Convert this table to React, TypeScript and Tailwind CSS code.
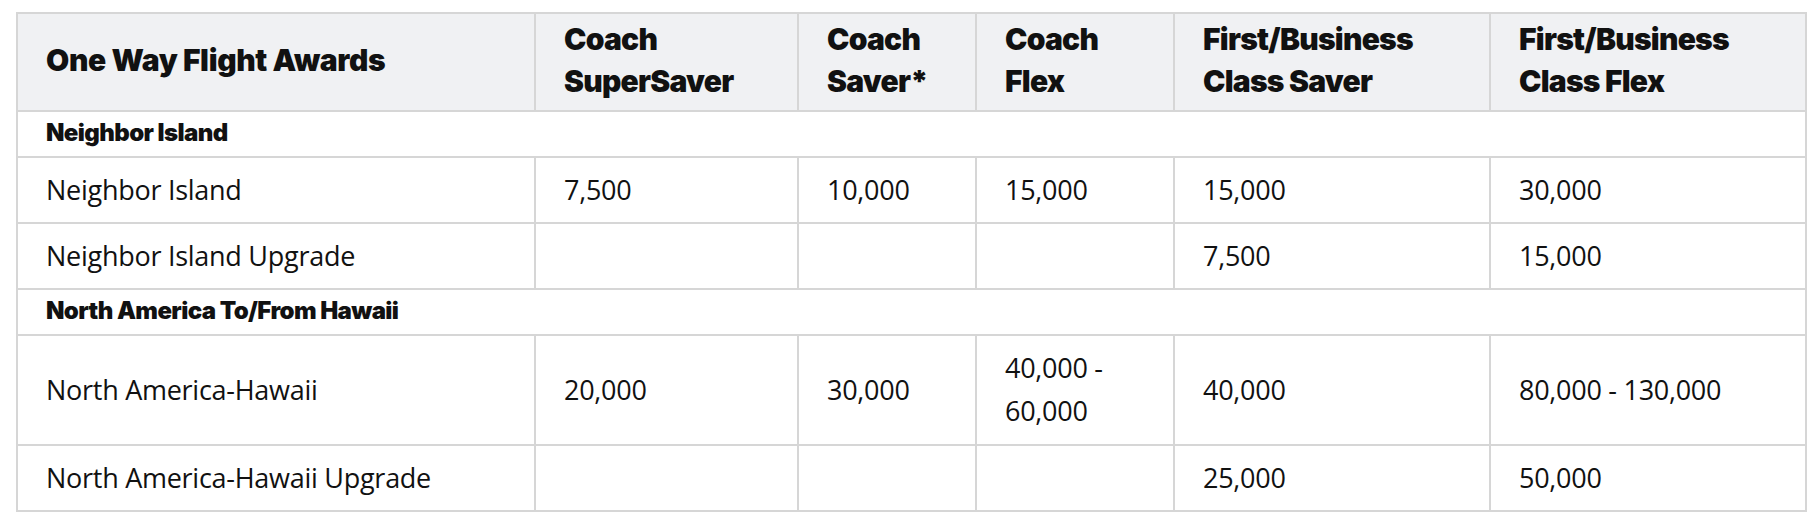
const head = ["One Way Flight Awards", "Coach\nSuperSaver", "Coach\nSaver*", "Coach\nFlex", "First/Business\nClass Saver", "First/Business\nClass Flex"];

type Row = { section?: string; cells?: string[]; tall?: boolean };

const rows: Row[] = [
  { section: "Neighbor Island" },
  { cells: ["Neighbor Island", "7,500", "10,000", "15,000", "15,000", "30,000"] },
  { cells: ["Neighbor Island Upgrade", "", "", "", "7,500", "15,000"] },
  { section: "North America To/From Hawaii" },
  { cells: ["North America-Hawaii", "20,000", "30,000", "40,000 -\n60,000", "40,000", "80,000 - 130,000"], tall: true },
  { cells: ["North America-Hawaii Upgrade", "", "", "", "25,000", "50,000"] },
];

export default function App() {
  return (
    <div className="w-[1818px] h-[513px] bg-white pl-[16px] pt-[12px] overflow-hidden">
      <table className="w-[1789px] table-fixed border-collapse text-[#111] font-['Open_Sans',sans-serif]">
        <colgroup>
          <col className="w-[518px]" />
          <col className="w-[263px]" />
          <col className="w-[178px]" />
          <col className="w-[198px]" />
          <col className="w-[316px]" />
          <col className="w-[316px]" />
        </colgroup>
        <thead>
          <tr className="h-[98px] bg-[#f0f1f3]">
            {head.map((h, i) => (
              <th
                key={i}
                className={`border-2 border-[#d6d6d6] px-[28px] pb-[4px] text-left align-middle font-['Inter',sans-serif] font-black text-[30px] leading-[42px] whitespace-pre-line ${i === 0 ? "tracking-[-0.012em]" : "tracking-[-0.025em]"}`}
              >
                {h}
              </th>
            ))}
          </tr>
        </thead>
        <tbody>
          {rows.map((r, i) =>
            r.section ? (
              <tr key={i} className="h-[46px]">
                <td colSpan={6} className="border-2 border-[#d6d6d6] px-[28px] pb-[2px] font-['Inter',sans-serif] font-black text-[24px] leading-[32px] tracking-[-0.025em]">
                  {r.section}
                </td>
              </tr>
            ) : (
              <tr key={i} className={r.tall ? "h-[110px]" : "h-[66px]"}>
                {r.cells!.map((c, j) => (
                  <td key={j} className="border-2 border-[#d6d6d6] px-[28px] pb-[2px] align-middle text-[27px] leading-[43px] tracking-[-0.01em] whitespace-pre-line">
                    {c}
                  </td>
                ))}
              </tr>
            )
          )}
        </tbody>
      </table>
    </div>
  );
}
